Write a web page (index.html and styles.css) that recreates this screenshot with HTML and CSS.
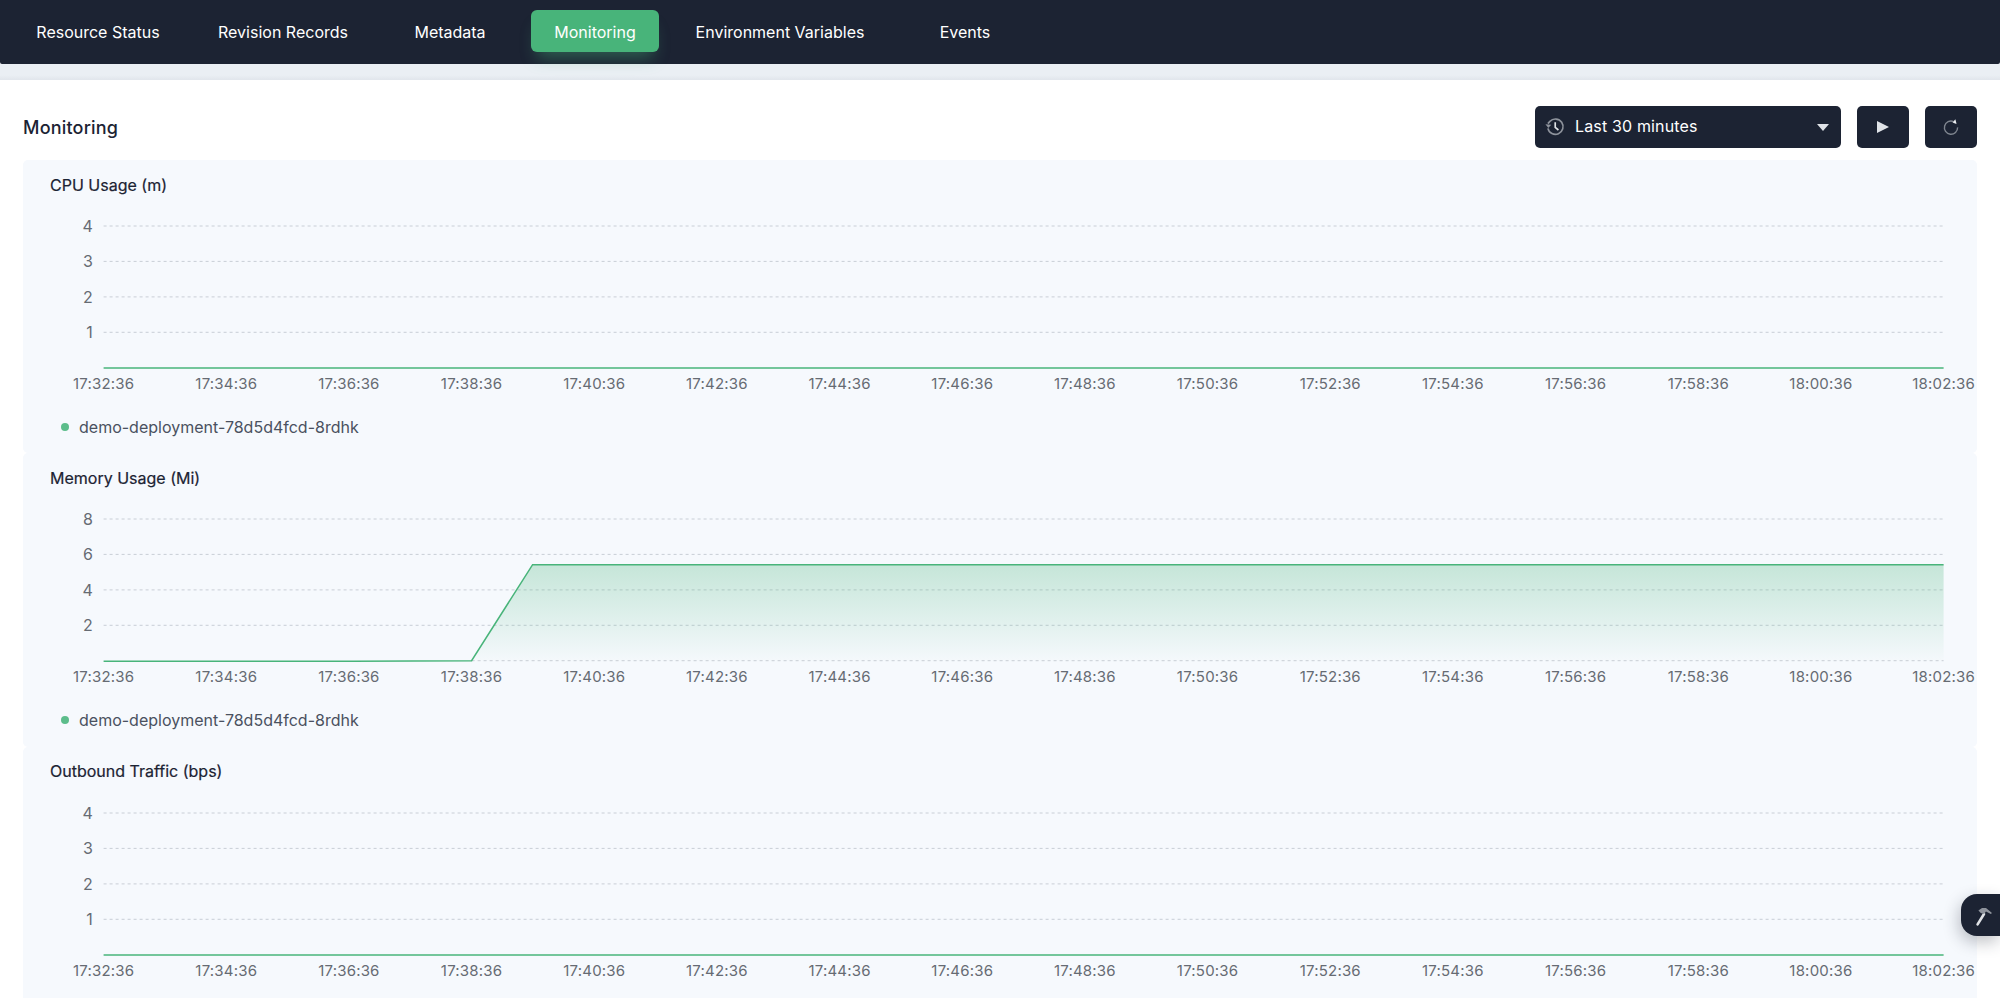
FILE: index.html
```html
<!DOCTYPE html>
<html lang="en">
<head>
    <meta charset="UTF-8" />
    <title>Monitoring</title>
    <link rel="stylesheet" href="styles.css">
</head>
<body>
    <nav class="tabs">
        <a class="tab tab-status">Resource Status</a>
        <a class="tab tab-revision">Revision Records</a>
        <a class="tab tab-metadata">Metadata</a>
        <a class="tab tab-monitoring active">Monitoring</a>
        <a class="tab tab-env">Environment Variables</a>
        <a class="tab tab-events">Events</a>
    </nav>
    <div class="strip"></div>

    <main class="content">
        <div class="toolbar">
            <h2>Monitoring</h2>
            <div class="controls">
                <div class="select">
                    <svg class="icon-history" width="20" height="20" viewBox="0 0 18 18" fill="none">
                        <path d="M2.6 10.2A6.9 6.9 0 1 0 4.4 3.9L2.6 6" stroke="#8e939c" stroke-width="1.5"/>
                        <path d="M0.4 6.6L3 9.8 5.6 7z" fill="#8e939c"/>
                        <path d="M9.2 4.8v4.5l2.9 2.4" stroke="#dfe2e6" stroke-width="1.5"/>
                    </svg>
                    <span class="select-text">Last 30 minutes</span>
                    <span class="caret"></span>
                </div>
                <button class="icon-btn" aria-label="Play">
                    <svg width="14" height="14" viewBox="0 0 14 14"><path d="M1 1l12 6-12 6z" fill="#e0e3e8"/></svg>
                </button>
                <button class="icon-btn" aria-label="Refresh">
                    <svg width="18" height="18" viewBox="0 0 18 18" fill="none">
                        <path d="M11.6 3.6A6.6 6.6 0 1 0 15.6 9.4" stroke="#7f858f" stroke-width="1.4"/>
                        <path d="M10.6 4.6L13.4 1.2 14.6 6z" fill="#eceef1"/>
                    </svg>
                </button>
            </div>
        </div>

        <!-- CPU -->
        <section class="panel">
            <h3>CPU Usage (m)</h3>
            <svg class="chart" width="1954" height="196" viewBox="0 0 1954 196">
                <g class="grid">
                    <line x1="80.6" x2="1920.6" y1="22" y2="22"/>
                    <line x1="80.6" x2="1920.6" y1="57.4" y2="57.4"/>
                    <line x1="80.6" x2="1920.6" y1="92.9" y2="92.9"/>
                    <line x1="80.6" x2="1920.6" y1="128.3" y2="128.3"/>
                </g>
                <g class="y-labels">
                    <text x="70" y="28">4</text>
                    <text x="70" y="63.4">3</text>
                    <text x="70" y="98.9">2</text>
                    <text x="70" y="134.3">1</text>
                </g>
                <path class="series" d="M80.6 164H1920.6"/>
                <g class="x-labels">
                    <text x="80.6" y="185">17:32:36</text>
                    <text x="203.3" y="185">17:34:36</text>
                    <text x="325.9" y="185">17:36:36</text>
                    <text x="448.6" y="185">17:38:36</text>
                    <text x="571.3" y="185">17:40:36</text>
                    <text x="693.9" y="185">17:42:36</text>
                    <text x="816.6" y="185">17:44:36</text>
                    <text x="939.3" y="185">17:46:36</text>
                    <text x="1061.9" y="185">17:48:36</text>
                    <text x="1184.6" y="185">17:50:36</text>
                    <text x="1307.3" y="185">17:52:36</text>
                    <text x="1429.9" y="185">17:54:36</text>
                    <text x="1552.6" y="185">17:56:36</text>
                    <text x="1675.3" y="185">17:58:36</text>
                    <text x="1797.9" y="185">18:00:36</text>
                    <text x="1920.6" y="185">18:02:36</text>
                </g>
            </svg>
            <div class="legend"><span class="dot"></span>demo-deployment-78d5d4fcd-8rdhk</div>
        </section>

        <!-- Memory -->
        <section class="panel">
            <h3>Memory Usage (Mi)</h3>
            <svg class="chart" width="1954" height="196" viewBox="0 0 1954 196">
                <defs>
                    <linearGradient id="memFill" x1="0" y1="0" x2="0" y2="1">
                        <stop offset="0" stop-color="#48b47a" stop-opacity="0.28"/>
                        <stop offset="1" stop-color="#48b47a" stop-opacity="0.01"/>
                    </linearGradient>
                </defs>
                <g class="grid">
                    <line x1="80.6" x2="1920.6" y1="22" y2="22"/>
                    <line x1="80.6" x2="1920.6" y1="57.4" y2="57.4"/>
                    <line x1="80.6" x2="1920.6" y1="92.9" y2="92.9"/>
                    <line x1="80.6" x2="1920.6" y1="128.3" y2="128.3"/>
                    <line x1="448.6" x2="1920.6" y1="163.7" y2="163.7"/>
                </g>
                <g class="y-labels">
                    <text x="70" y="28">8</text>
                    <text x="70" y="63.4">6</text>
                    <text x="70" y="98.9">4</text>
                    <text x="70" y="134.3">2</text>
                </g>
                <path d="M448.6 163.7L509.6 67.7H1920.6V163.7z" fill="url(#memFill)"/>
                <path class="series" d="M80.6 164.3L330 164.3 448.6 163.7 509.6 67.7H1920.6"/>
                <g class="x-labels">
                    <text x="80.6" y="185">17:32:36</text>
                    <text x="203.3" y="185">17:34:36</text>
                    <text x="325.9" y="185">17:36:36</text>
                    <text x="448.6" y="185">17:38:36</text>
                    <text x="571.3" y="185">17:40:36</text>
                    <text x="693.9" y="185">17:42:36</text>
                    <text x="816.6" y="185">17:44:36</text>
                    <text x="939.3" y="185">17:46:36</text>
                    <text x="1061.9" y="185">17:48:36</text>
                    <text x="1184.6" y="185">17:50:36</text>
                    <text x="1307.3" y="185">17:52:36</text>
                    <text x="1429.9" y="185">17:54:36</text>
                    <text x="1552.6" y="185">17:56:36</text>
                    <text x="1675.3" y="185">17:58:36</text>
                    <text x="1797.9" y="185">18:00:36</text>
                    <text x="1920.6" y="185">18:02:36</text>
                </g>
            </svg>
            <div class="legend"><span class="dot"></span>demo-deployment-78d5d4fcd-8rdhk</div>
        </section>

        <!-- Traffic -->
        <section class="panel">
            <h3>Outbound Traffic (bps)</h3>
            <svg class="chart" width="1954" height="196" viewBox="0 0 1954 196">
                <g class="grid">
                    <line x1="80.6" x2="1920.6" y1="22" y2="22"/>
                    <line x1="80.6" x2="1920.6" y1="57.4" y2="57.4"/>
                    <line x1="80.6" x2="1920.6" y1="92.9" y2="92.9"/>
                    <line x1="80.6" x2="1920.6" y1="128.3" y2="128.3"/>
                </g>
                <g class="y-labels">
                    <text x="70" y="28">4</text>
                    <text x="70" y="63.4">3</text>
                    <text x="70" y="98.9">2</text>
                    <text x="70" y="134.3">1</text>
                </g>
                <path class="series" d="M80.6 164H1920.6"/>
                <g class="x-labels">
                    <text x="80.6" y="185">17:32:36</text>
                    <text x="203.3" y="185">17:34:36</text>
                    <text x="325.9" y="185">17:36:36</text>
                    <text x="448.6" y="185">17:38:36</text>
                    <text x="571.3" y="185">17:40:36</text>
                    <text x="693.9" y="185">17:42:36</text>
                    <text x="816.6" y="185">17:44:36</text>
                    <text x="939.3" y="185">17:46:36</text>
                    <text x="1061.9" y="185">17:48:36</text>
                    <text x="1184.6" y="185">17:50:36</text>
                    <text x="1307.3" y="185">17:52:36</text>
                    <text x="1429.9" y="185">17:54:36</text>
                    <text x="1552.6" y="185">17:56:36</text>
                    <text x="1675.3" y="185">17:58:36</text>
                    <text x="1797.9" y="185">18:00:36</text>
                    <text x="1920.6" y="185">18:02:36</text>
                </g>
            </svg>
        </section>
    </main>

    <button class="float-btn" aria-label="Tools">
        <svg width="18" height="20" viewBox="0 0 18 20" fill="none">
            <path d="M9 7L2.6 17.4" stroke="#dfe2e6" stroke-width="2.6" stroke-linecap="round"/>
            <path d="M3.4 3.6L7 1h4l6 5-1.2 1-4.8-2.4-2 2.4L5.8 6z" fill="#8e939c"/>
        </svg>
    </button>
</body>
</html>
```

FILE: styles.css
```css
/* General */
html, body {
    height: 100%;
    overflow: hidden;
}

body {
    margin: 0;
    background-color: #fff;
    font-family: Inter, "Noto Sans", sans-serif;
    color: #1c2333;
}

/* Top tabs */
.tabs {
    position: relative;
    z-index: 1;
    display: flex;
    align-items: center;
    gap: 15px;
    height: 64px;
    padding: 0 14px;
    box-sizing: border-box;
    background-color: #1c2333;
    border-radius: 0 0 2px 2px;
}

.tab {
    display: flex;
    align-items: center;
    justify-content: center;
    height: 42px;
    margin-bottom: 2px;
    padding-top: 2px;
    box-sizing: border-box;
    border-radius: 6px;
    color: #fff;
    font-size: 16px;
}

.tab-status { width: 168px; }
.tab-revision { width: 172px; }
.tab-metadata { width: 132px; }
.tab-monitoring { width: 128px; }
.tab-env { width: 212px; }
.tab-events { width: 128px; }

.tab.active {
    background-color: #48b47a;
    box-shadow: 0 12px 16px -6px rgba(72, 180, 122, 0.4);
}

.strip {
    height: 16px;
    background: linear-gradient(#eaeff4 70%, #e1e6ec);
}

/* Content */
.content {
    padding: 26px 23px 0;
    border-radius: 3px 3px 0 0;
}

.toolbar {
    display: flex;
    align-items: center;
    justify-content: space-between;
    height: 42px;
    margin-bottom: 12px;
}

h2 {
    margin: 0;
    font-size: 18px;
    font-weight: 500;
    letter-spacing: 0.2px;
}

.controls {
    display: flex;
    gap: 16px;
}

.select {
    display: flex;
    align-items: center;
    width: 306px;
    height: 42px;
    padding: 0 12px 0 10px;
    box-sizing: border-box;
    background-color: #1c2333;
    border-radius: 5px;
    color: #fff;
    font-size: 16px;
    letter-spacing: 0.15px;
}

.select-text {
    margin-left: 10px;
    margin-bottom: 2px;
    flex: 1;
}

.caret {
    width: 0;
    height: 0;
    border-left: 6px solid transparent;
    border-right: 6px solid transparent;
    border-top: 7px solid #e0e3e8;
}

.icon-btn {
    display: flex;
    align-items: center;
    justify-content: center;
    width: 52px;
    height: 42px;
    padding: 0;
    border: none;
    border-radius: 5px;
    background-color: #1c2333;
}

/* Chart panels */
.panel {
    height: 293.3px;
    box-sizing: border-box;
    padding-top: 14.5px;
    background-color: #f6f9fd;
    border-radius: 5px;
}

h3 {
    margin: 0 0 9.5px 27px;
    font-size: 16px;
    line-height: 20px;
    font-weight: 400;
    -webkit-text-stroke: 0.2px #1c2333;
}

.chart {
    display: block;
}

.grid line {
    stroke: #c9ced6;
    stroke-width: 1;
    stroke-dasharray: 3 3;
}

.series {
    fill: none;
    stroke: #48b47a;
    stroke-width: 1.5;
}

.chart text {
    font-family: Inter, "Noto Sans", sans-serif;
    font-size: 15px;
    letter-spacing: 0.2px;
    fill: #666b73;
}

.y-labels text {
    font-size: 16px;
    text-anchor: end;
}

.x-labels text {
    text-anchor: middle;
}

.legend {
    display: flex;
    align-items: center;
    height: 20px;
    margin: 17px 0 0 38px;
    font-size: 16px;
    color: #4a5160;
}

.dot {
    width: 8px;
    height: 8px;
    margin-right: 10px;
    border-radius: 50%;
    background-color: #5cbd8b;
}

/* Floating tool button */
.float-btn {
    position: fixed;
    right: 0;
    top: 894px;
    width: 39px;
    height: 42px;
    padding: 3px 0 0 14px;
    border: none;
    border-radius: 16px 0 0 16px;
    background-color: #1c2333;
    box-shadow: -2px 6px 16px rgba(28, 35, 51, 0.28);
    display: flex;
    align-items: center;
    justify-content: flex-start;
}
```
